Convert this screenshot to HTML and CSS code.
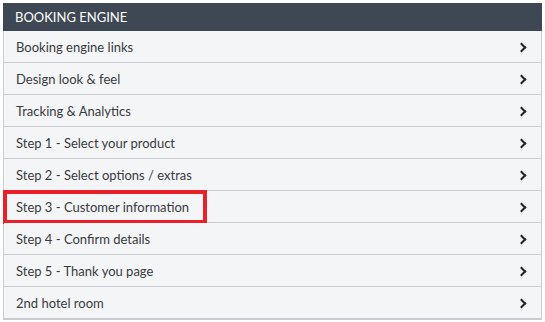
FILE: index.html
```html
<!DOCTYPE html>
<html lang="en">
<head>
    <meta charset="UTF-8">
    <title>Booking engine</title>
    <link rel="stylesheet" href="styles.css">
</head>
<body>
    <div class="panel">
        <div class="panel-head">BOOKING ENGINE</div>
        <ul class="menu">
            <li><span>Booking engine links</span><i class="chev"></i></li>
            <li><span>Design look &amp; feel</span><i class="chev"></i></li>
            <li><span>Tracking &amp; Analytics</span><i class="chev"></i></li>
            <li><span>Step 1 - Select your product</span><i class="chev"></i></li>
            <li><span>Step 2 - Select options / extras</span><i class="chev"></i></li>
            <li class="marked"><span>Step 3 - Customer information</span><i class="chev"></i><b class="mark"></b></li>
            <li><span>Step 4 - Confirm details</span><i class="chev"></i></li>
            <li><span>Step 5 - Thank you page</span><i class="chev"></i></li>
            <li><span>2nd hotel room</span><i class="chev"></i></li>
        </ul>
    </div>
</body>
</html>
```

FILE: styles.css
```css
body {
    margin: 0;
    padding: 3px;
    background: #fff;
    font-family: Lato, "Open Sans", sans-serif;
}

.panel {
    width: 539px;
    border: 1px solid #c9ccd0;
    border-top: none;
    box-sizing: border-box;
}

.panel-head {
    background: #3d4854;
    color: #fff;
    font-size: 13px;
    height: 28px;
    line-height: 28px;
    padding-left: 12px;
    margin: 0 -1px;
}

.menu {
    list-style: none;
    margin: 0;
    padding: 0;
}

.menu li {
    position: relative;
    display: flex;
    align-items: center;
    justify-content: space-between;
    height: 31px;
    padding: 0 16px 0 12px;
    background: #f4f5f7;
    border-bottom: 1px solid #c9ccd0;
    color: #393b40;
    font-size: 13px;
}

.chev {
    width: 5px;
    height: 5px;
    border-top: 2px solid #222;
    border-right: 2px solid #222;
    transform: rotate(45deg);
    margin-top: 1px;
}

/* red highlight box drawn over the row */
.mark {
    position: absolute;
    left: -1px;
    top: -1px;
    width: 204px;
    height: 34px;
    border: 4px solid #e8202a;
    box-sizing: border-box;
}
```
